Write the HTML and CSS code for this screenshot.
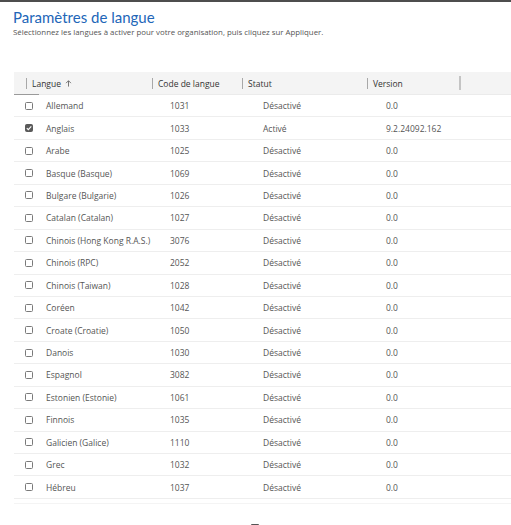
FILE: index.html
```html
<!DOCTYPE html>
<html lang="fr">
<head>
<meta charset="utf-8">
<link rel="stylesheet" href="styles.css">
</head>
<body>
<div class="topline"></div>
<header class="head">
  <h1 class="title">Paramètres de langue</h1>
  <p class="subtitle">Sélectionnez les langues à activer pour votre organisation, puis cliquez sur Appliquer.</p>
</header>
<div class="grid">
  <div class="hrow">
    <div class="hcell c1"><span class="div"></span><span class="htext">Langue</span><svg class="arrow" viewBox="0 0 8 8" width="7" height="7"><path d="M4 7.5V1M1.2 3.6L4 0.8 6.8 3.6" fill="none" stroke="#555" stroke-width="0.9"/></svg><span class="sortline"></span></div>
    <div class="hcell c2"><span class="div"></span><span class="htext">Code de langue</span></div>
    <div class="hcell c3"><span class="div"></span><span class="htext">Statut</span></div>
    <div class="hcell c4"><span class="div"></span><span class="htext">Version</span></div>
    <div class="hcell c5"><span class="div div-last"></span></div>
  </div>
  <div class="row"><div class="c1"><span class="cb"></span>Allemand</div><div class="c2">1031</div><div class="c3">Désactivé</div><div class="c4">0.0</div></div>
  <div class="row"><div class="c1"><span class="cb checked"><svg viewBox="0 0 8 8" width="8" height="8"><path d="M1.8 4.2L3.3 5.7 6.3 2.3" fill="none" stroke="#fff" stroke-width="1.1"/></svg></span>Anglais</div><div class="c2">1033</div><div class="c3">Activé</div><div class="c4">9.2.24092.162</div></div>
  <div class="row"><div class="c1"><span class="cb"></span>Arabe</div><div class="c2">1025</div><div class="c3">Désactivé</div><div class="c4">0.0</div></div>
  <div class="row"><div class="c1"><span class="cb"></span>Basque (Basque)</div><div class="c2">1069</div><div class="c3">Désactivé</div><div class="c4">0.0</div></div>
  <div class="row"><div class="c1"><span class="cb"></span>Bulgare (Bulgarie)</div><div class="c2">1026</div><div class="c3">Désactivé</div><div class="c4">0.0</div></div>
  <div class="row"><div class="c1"><span class="cb"></span>Catalan (Catalan)</div><div class="c2">1027</div><div class="c3">Désactivé</div><div class="c4">0.0</div></div>
  <div class="row"><div class="c1"><span class="cb"></span>Chinois (Hong Kong R.A.S.)</div><div class="c2">3076</div><div class="c3">Désactivé</div><div class="c4">0.0</div></div>
  <div class="row"><div class="c1"><span class="cb"></span>Chinois (RPC)</div><div class="c2">2052</div><div class="c3">Désactivé</div><div class="c4">0.0</div></div>
  <div class="row"><div class="c1"><span class="cb"></span>Chinois (Taiwan)</div><div class="c2">1028</div><div class="c3">Désactivé</div><div class="c4">0.0</div></div>
  <div class="row"><div class="c1"><span class="cb"></span>Coréen</div><div class="c2">1042</div><div class="c3">Désactivé</div><div class="c4">0.0</div></div>
  <div class="row"><div class="c1"><span class="cb"></span>Croate (Croatie)</div><div class="c2">1050</div><div class="c3">Désactivé</div><div class="c4">0.0</div></div>
  <div class="row"><div class="c1"><span class="cb"></span>Danois</div><div class="c2">1030</div><div class="c3">Désactivé</div><div class="c4">0.0</div></div>
  <div class="row"><div class="c1"><span class="cb"></span>Espagnol</div><div class="c2">3082</div><div class="c3">Désactivé</div><div class="c4">0.0</div></div>
  <div class="row"><div class="c1"><span class="cb"></span>Estonien (Estonie)</div><div class="c2">1061</div><div class="c3">Désactivé</div><div class="c4">0.0</div></div>
  <div class="row"><div class="c1"><span class="cb"></span>Finnois</div><div class="c2">1035</div><div class="c3">Désactivé</div><div class="c4">0.0</div></div>
  <div class="row"><div class="c1"><span class="cb"></span>Galicien (Galice)</div><div class="c2">1110</div><div class="c3">Désactivé</div><div class="c4">0.0</div></div>
  <div class="row"><div class="c1"><span class="cb"></span>Grec</div><div class="c2">1032</div><div class="c3">Désactivé</div><div class="c4">0.0</div></div>
  <div class="row"><div class="c1"><span class="cb"></span>Hébreu</div><div class="c2">1037</div><div class="c3">Désactivé</div><div class="c4">0.0</div></div>
  <div class="gridfoot"></div>
</div>
<div class="bottom"><span class="nub"></span></div>
</body>
</html>
```
FILE: styles.css
```css
html, body {
  margin: 0;
  padding: 0;
  background: #fff;
  font-family: "Open Sans", "Noto Sans", "Liberation Sans", sans-serif;
  color: #444;
  overflow: hidden;
}
.topline {
  height: 2px;
  background: #4d4d4d;
}
.head {
  padding: 6px 0 0 13px;
  height: 62px;
  box-sizing: border-box;
}
.title {
  margin: 0;
  font-family: "Lato", "Open Sans", sans-serif;
  font-size: 15px;
  font-weight: 400;
  color: #2266b8;
  line-height: 19px;
}
.subtitle {
  margin: 0;
  font-size: 7.85px;
  color: #555;
  line-height: 11px;
}
.grid {
  margin: 8px 0 0 14px;
  font-size: 8.5px;
}
.hrow, .row {
  display: grid;
  grid-template-columns: 138px 90px 125px 93px 1fr;
  align-items: center;
}
.hrow {
  height: 22px;
  background: #f4f4f4;
  border-bottom: 1px solid #ebebeb;
  color: #333;
}
.hcell {
  position: relative;
  display: flex;
  align-items: center;
  height: 100%;
}
.div {
  width: 1px;
  height: 11px;
  background: #a8a8a8;
  margin-right: 5px;
}
.c1 .div { margin-left: 12px; }
.div-last {
  width: 2px;
  height: 14px;
  background: #d8d8d8;
  border: 1px solid #c4c4c4;
  box-sizing: border-box;
  margin-left: -1px;
}
.arrow { margin-left: 4px; }
.sortline {
  position: absolute;
  left: 0;
  bottom: -1px;
  width: 25px;
  height: 1px;
  background: #9a9a9a;
}
.row {
  height: 22.45px;
  box-sizing: border-box;
  border-bottom: 1px solid #eeeeee;
  color: #555;
}
.row .c1 {
  display: flex;
  align-items: center;
}
.cb {
  width: 8px;
  height: 8px;
  box-sizing: border-box;
  border: 1px solid #7a7a7a;
  border-radius: 1.5px;
  margin: 0 13px 0 11px;
  display: flex;
}
.cb.checked {
  background: #5a5a5a;
  border-color: #5a5a5a;
}
.cb.checked svg { margin: -1px; }
.row .c2 { padding-left: 18px; }
.row .c3 { padding-left: 21px; }
.row .c4 { padding-left: 19px; }
.gridfoot {
  height: 4px;
  border-bottom: 1px solid #f4f4f4;
}
.bottom {
  display: flex;
  justify-content: center;
  padding-top: 20px;
  padding-right: 2px;
}
.nub {
  width: 8px;
  height: 2px;
  background: #555;
  border-radius: 1px 1px 0 0;
}
```
